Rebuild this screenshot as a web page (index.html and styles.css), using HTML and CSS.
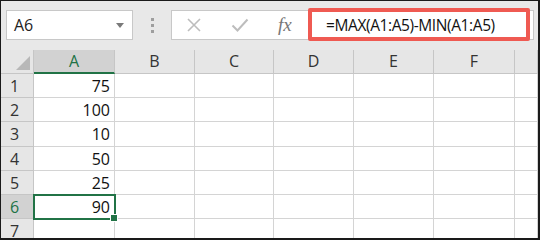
FILE: index.html
```html
<!DOCTYPE html>
<html lang="en">

<head>
    <meta charset="UTF-8">
    <title>MAX - MIN</title>
    <link rel="stylesheet" href="styles.css">
</head>

<body>
    <div class="window">
        <!-- Строка формул -->
        <div class="toolbar">
            <div class="name-box">
                <span>A6</span>
                <span class="caret"></span>
            </div>
            <div class="grip"><i></i><i></i><i></i></div>
            <div class="formula-box">
                <svg class="icon" width="16" height="16" viewBox="0 0 16 16">
                    <path d="M2 2 L14 14 M14 2 L2 14" stroke="#bdbdbd" stroke-width="1.6" fill="none" />
                </svg>
                <svg class="icon" width="18" height="16" viewBox="0 0 18 16">
                    <path d="M1.5 8.5 L6.5 13.5 L16.5 2.5" stroke="#bdbdbd" stroke-width="2" fill="none" />
                </svg>
                <span class="fx">fx</span>
                <div class="formula">=MAX(A1:A5)-MIN(A1:A5)</div>
            </div>
        </div>

        <!-- Таблица -->
        <div class="sheet">
            <div class="corner"></div>
            <div class="col-head active">A</div>
            <div class="col-head">B</div>
            <div class="col-head">C</div>
            <div class="col-head">D</div>
            <div class="col-head">E</div>
            <div class="col-head">F</div>
            <div class="col-head"></div>

            <div class="row-head">1</div>
            <div class="cell num">75</div>
            <div class="cell"></div><div class="cell"></div><div class="cell"></div><div class="cell"></div><div class="cell"></div><div class="cell"></div>

            <div class="row-head">2</div>
            <div class="cell num">100</div>
            <div class="cell"></div><div class="cell"></div><div class="cell"></div><div class="cell"></div><div class="cell"></div><div class="cell"></div>

            <div class="row-head">3</div>
            <div class="cell num">10</div>
            <div class="cell"></div><div class="cell"></div><div class="cell"></div><div class="cell"></div><div class="cell"></div><div class="cell"></div>

            <div class="row-head">4</div>
            <div class="cell num">50</div>
            <div class="cell"></div><div class="cell"></div><div class="cell"></div><div class="cell"></div><div class="cell"></div><div class="cell"></div>

            <div class="row-head">5</div>
            <div class="cell num">25</div>
            <div class="cell"></div><div class="cell"></div><div class="cell"></div><div class="cell"></div><div class="cell"></div><div class="cell"></div>

            <div class="row-head active">6</div>
            <div class="cell num selected">90<span class="handle"></span></div>
            <div class="cell"></div><div class="cell"></div><div class="cell"></div><div class="cell"></div><div class="cell"></div><div class="cell"></div>

            <div class="row-head">7</div>
            <div class="cell"></div>
            <div class="cell"></div><div class="cell"></div><div class="cell"></div><div class="cell"></div><div class="cell"></div><div class="cell"></div>
        </div>
    </div>
</body>

</html>
```

FILE: styles.css
```css
/* Окно в стиле Excel */
body {
    margin: 0;
    font-family: "Open Sans", "Noto Sans", sans-serif;
}

.window {
    width: 540px;
    height: 240px;
    box-sizing: border-box;
    border-style: solid;
    border-color: #1a1a1a;
    border-width: 1px 2px 2px 1px;
    background: #fff;
    overflow: hidden;
}

.toolbar {
    height: 49px;
    background: #e8e8e8;
    display: flex;
    align-items: center;
    padding: 0 4px 1px 5px;
    box-sizing: border-box;
}

.name-box {
    width: 127px;
    height: 30px;
    box-sizing: border-box;
    background: #fff;
    border: 1px solid #c8c8c8;
    display: flex;
    align-items: center;
    justify-content: space-between;
    padding: 0 8px 0 7px;
    font-size: 16px;
    color: #222;
}

.caret {
    width: 0;
    height: 0;
    border-left: 4px solid transparent;
    border-right: 4px solid transparent;
    border-top: 5px solid #7a7a7a;
}

.grip {
    width: 38px;
    display: flex;
    flex-direction: column;
    align-items: center;
    gap: 3px;
}

.grip i {
    width: 3px;
    height: 3px;
    background: #9e9e9e;
}

.formula-box {
    flex: 1;
    height: 30px;
    box-sizing: border-box;
    background: #fff;
    border: 1px solid #c8c8c8;
    display: flex;
    align-items: center;
    padding-left: 14px;
    position: relative;
}

.icon {
    margin-right: 29px;
}

.fx {
    font-family: "Liberation Serif", serif;
    font-style: italic;
    font-size: 19px;
    color: #777;
    width: 31px;
}

.formula {
    font-size: 15.5px;
    letter-spacing: -0.4px;
    color: #111;
    padding-left: 17px;
}

/* Красная рамка вокруг формулы */
.formula::before {
    content: "";
    position: absolute;
    left: 136px;
    top: -3px;
    right: 3px;
    bottom: -2px;
    border: 4px solid #ef5a52;
    border-radius: 2px;
}

.sheet {
    display: grid;
    grid-template-columns: 33px 81px 80px 79px 80px 80px 81px 1fr;
    grid-template-rows: 24px 24px 24px 25px 24px 24px 24px 24px;
    font-size: 16px;
}

.sheet > div {
    box-sizing: border-box;
    border-right: 1px solid #d4d4d4;
    border-bottom: 1px solid #d4d4d4;
}

.corner {
    background: #e6e6e6;
    position: relative;
    border-right-color: #c6c6c6 !important;
    border-bottom-color: #c6c6c6 !important;
}

.corner::after {
    content: "";
    position: absolute;
    right: 3px;
    bottom: 3px;
    border-left: 14px solid transparent;
    border-bottom: 14px solid #b8b8b8;
}

.col-head {
    background: #e6e6e6;
    color: #333;
    text-align: center;
    line-height: 23px;
    border-right-color: #c6c6c6 !important;
    border-bottom-color: #c6c6c6 !important;
}

.col-head.active {
    background: #d2d2d2;
    color: #217346;
    border-bottom: 2px solid #217346 !important;
}

.row-head {
    background: #e6e6e6;
    color: #333;
    padding-left: 9px;
    line-height: 24px;
    border-right-color: #c6c6c6 !important;
    border-bottom-color: #c6c6c6 !important;
}

.row-head.active {
    background: #d2d2d2;
    color: #217346;
}

.cell.num {
    text-align: right;
    padding-right: 4px;
    line-height: 24px;
    color: #111;
}

.cell.selected {
    position: relative;
    outline: 2px solid #217346;
    outline-offset: -1px;
}

.handle {
    position: absolute;
    right: -4px;
    bottom: -4px;
    width: 6px;
    height: 6px;
    background: #217346;
    border: 1px solid #fff;
}
```
